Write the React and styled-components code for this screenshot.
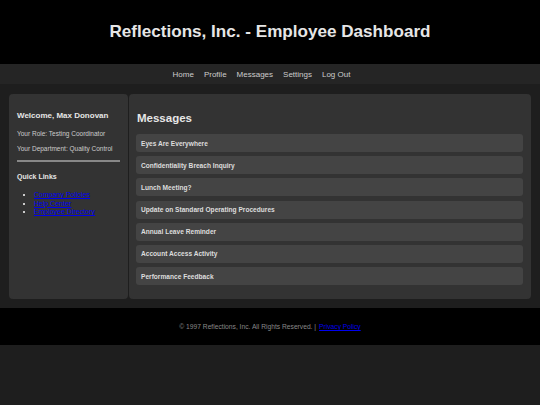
import React from 'react';
import styled, { createGlobalStyle } from 'styled-components';

const GlobalStyle = createGlobalStyle`
  html, body {
    margin: 0;
    padding: 0;
    background-color: #1e1e1e;
    font-family: "Liberation Sans", Arial, sans-serif;
    color: #ddd;
  }
`;

const Header = styled.header`
  background-color: #000;
  height: 64px;
  display: flex;
  align-items: center;
  justify-content: center;
`;

const Title = styled.h1`
  margin: 0;
  font-size: 17.1px;
  font-weight: bold;
  color: #e6e6e6;
`;

const Nav = styled.nav`
  background-color: #252525;
  height: 20px;
  display: flex;
  align-items: center;
  justify-content: center;
  gap: 10px;
  padding-right: 17px;
`;

const NavLink = styled.a`
  color: #ccc;
  font-size: 8px;
  text-decoration: none;
`;

const Container = styled.div`
  display: flex;
  gap: 1px;
  padding: 10px 9px 9px;
`;

const Sidebar = styled.aside`
  width: 103px;
  background-color: #333;
  border-radius: 4px;
  padding: 8px;
`;

const Main = styled.main`
  flex: 1;
  background-color: #333;
  border-radius: 4px;
  padding: 8px 8px 14px 7px;
`;

const Welcome = styled.h3`
  margin: 9px 0 10px;
  font-size: 8px;
  color: #e6e6e6;
`;

const Info = styled.p`
  margin: 0 0 8px;
  font-size: 6.5px;
  color: #ccc;
`;

const Rule = styled.hr`
  border: none;
  height: 2px;
  background-color: #888;
  margin: 3px 0 11px;
`;

const LinksHeading = styled.h4`
  margin: 0 0 11px;
  font-size: 7px;
  color: #e6e6e6;
`;

const LinkList = styled.ul`
  margin: 0;
  padding-left: 17px;
  font-size: 7px;
  line-height: 8.5px;
  color: #fff;
`;

const Link = styled.a`
  color: #0000ee;
`;

const Heading = styled.h2`
  margin: 10px 0 10px 1px;
  font-size: 11.5px;
  color: #e6e6e6;
`;

const MessageList = styled.div`
  display: flex;
  flex-direction: column;
  gap: 4.2px;
`;

const Message = styled.div`
  background-color: #444;
  border-radius: 3px;
  height: 18px;
  display: flex;
  align-items: center;
  padding: 0 5px;
  font-size: 6.6px;
  font-weight: bold;
  color: #ddd;
`;

const Footer = styled.footer`
  background-color: #000;
  height: 37px;
  display: flex;
  align-items: center;
  justify-content: center;
  font-size: 6.7px;
  color: #888;
`;

const FooterLink = styled.a`
  color: #0000ee;
  margin-left: 3px;
`;

const messages = [
  'Eyes Are Everywhere',
  'Confidentiality Breach Inquiry',
  'Lunch Meeting?',
  'Update on Standard Operating Procedures',
  'Annual Leave Reminder',
  'Account Access Activity',
  'Performance Feedback',
];

export default function App() {
  return (
    <>
      <GlobalStyle />
      <Header>
        <Title>Reflections, Inc. - Employee Dashboard</Title>
      </Header>
      <Nav>
        <NavLink href="#">Home</NavLink>
        <NavLink href="#">Profile</NavLink>
        <NavLink href="#">Messages</NavLink>
        <NavLink href="#">Settings</NavLink>
        <NavLink href="#">Log Out</NavLink>
      </Nav>
      <Container>
        <Sidebar>
          <Welcome>Welcome, Max Donovan</Welcome>
          <Info>Your Role: Testing Coordinator</Info>
          <Info>Your Department: Quality Control</Info>
          <Rule />
          <LinksHeading>Quick Links</LinksHeading>
          <LinkList>
            <li><Link href="#">Company Policies</Link></li>
            <li><Link href="#">Help Center</Link></li>
            <li><Link href="#">Employee Directory</Link></li>
          </LinkList>
        </Sidebar>
        <Main>
          <Heading>Messages</Heading>
          <MessageList>
            {messages.map((m) => (
              <Message key={m}>{m}</Message>
            ))}
          </MessageList>
        </Main>
      </Container>
      <Footer>
        © 1997 Reflections, Inc. All Rights Reserved. |
        <FooterLink href="#">Privacy Policy</FooterLink>
      </Footer>
    </>
  );
}
